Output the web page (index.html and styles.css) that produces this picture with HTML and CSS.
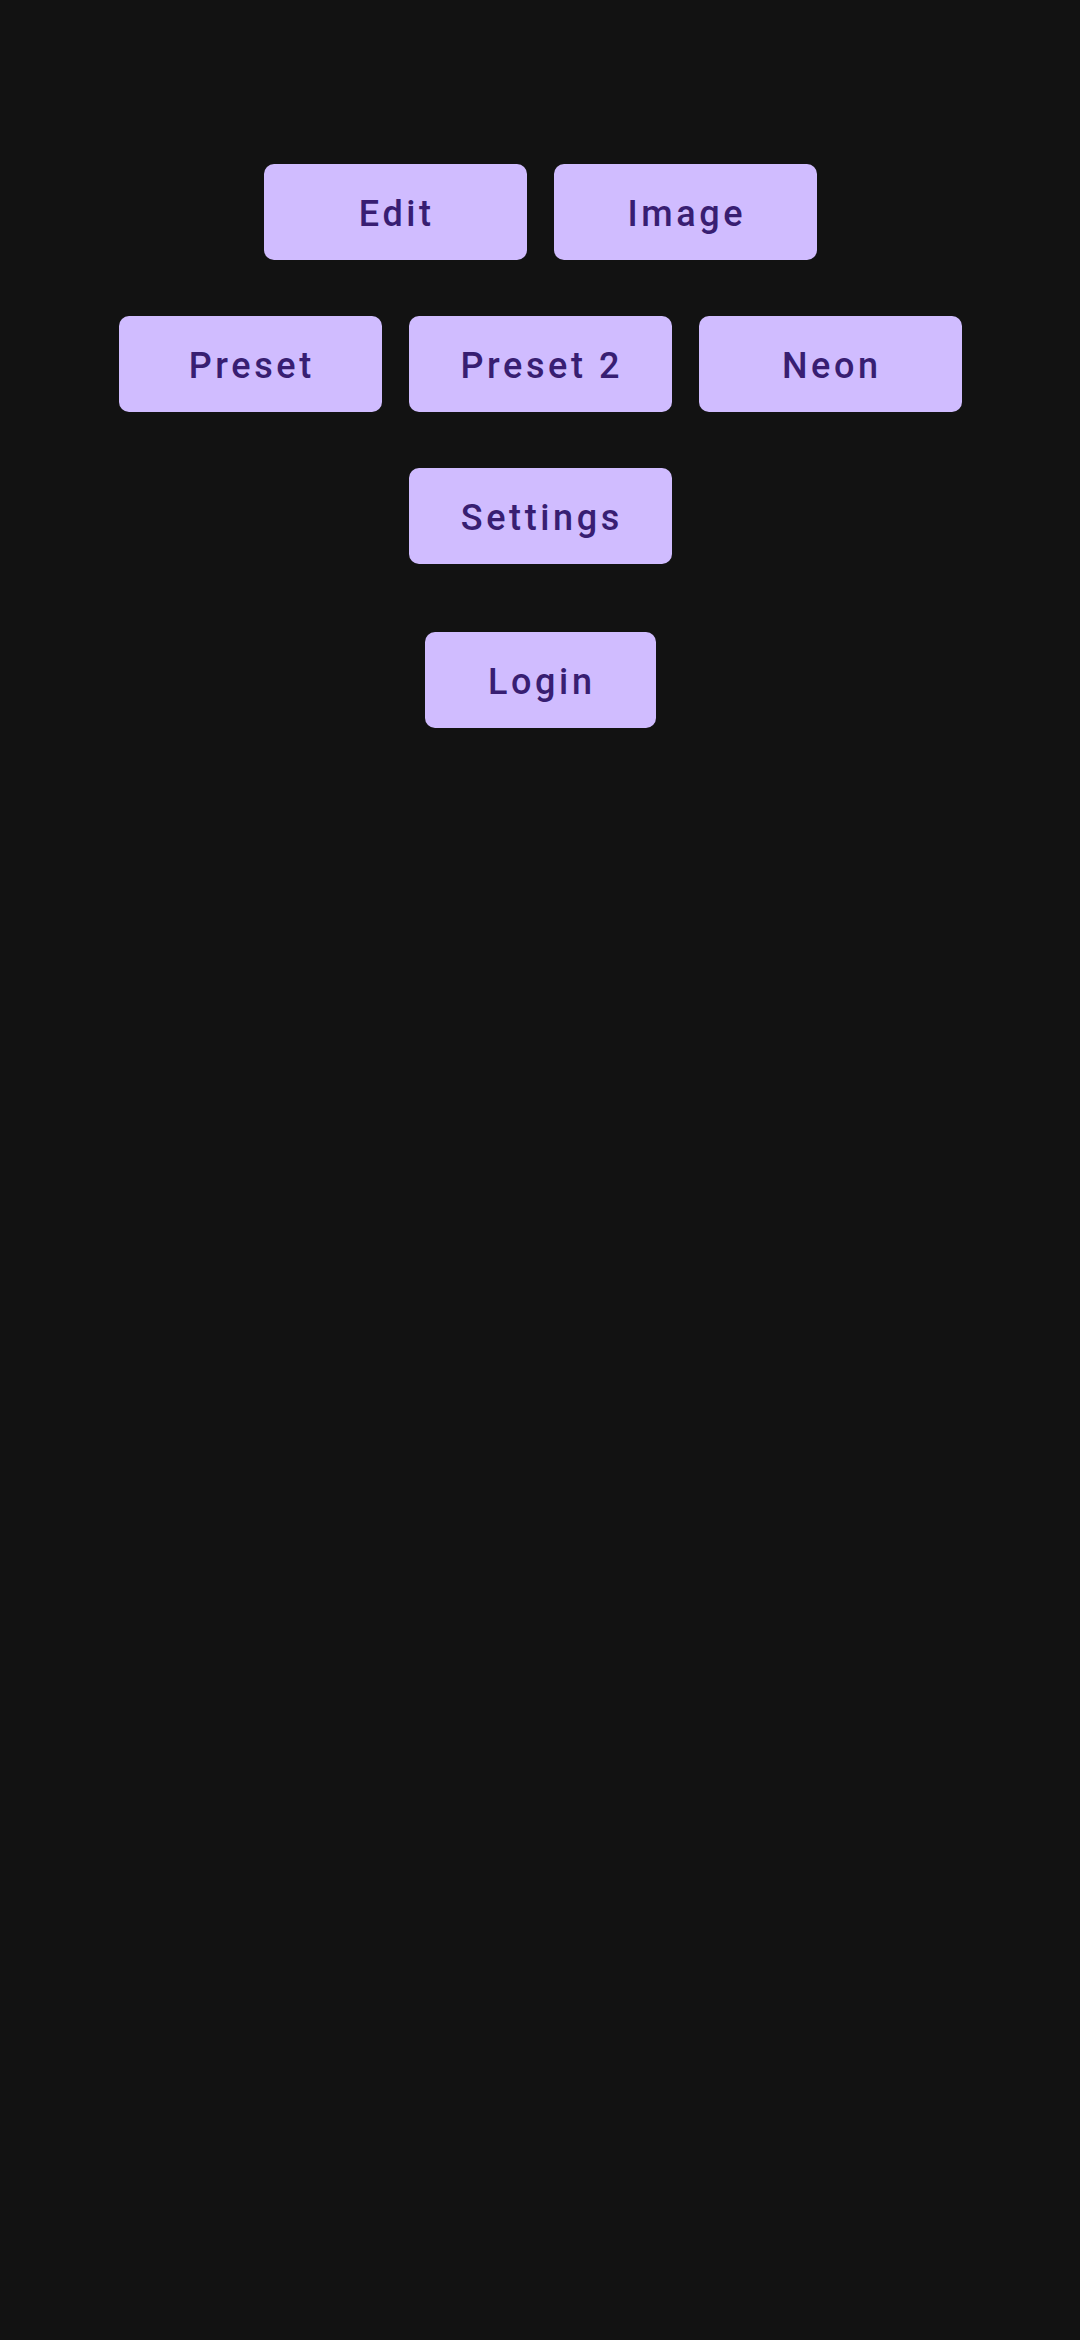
FILE: index.html
```html
<!DOCTYPE html>
<html lang="en">
<head>
    <meta charset="UTF-8">
    <title>Buttons</title>
    <link rel="stylesheet" href="styles.css">
</head>
<body>
    <div class="screen">
        <div class="row">
            <button class="btn">Edit</button>
            <button class="btn">Image</button>
        </div>
        <div class="row">
            <button class="btn">Preset</button>
            <button class="btn">Preset 2</button>
            <button class="btn">Neon</button>
        </div>
        <div class="row">
            <button class="btn">Settings</button>
        </div>
        <div class="row login-row">
            <button class="btn btn-login">Login</button>
        </div>
    </div>
</body>
</html>
```

FILE: styles.css
```css
body { margin: 0; padding: 0; background: #121212; font-family: Roboto, "Noto Sans", sans-serif; }
.screen { min-height: 2340px; padding-top: 164px; box-sizing: border-box; display: flex; flex-direction: column; align-items: center; gap: 56px; }
.row { display: flex; justify-content: center; gap: 27px; }
.login-row { margin-top: 12px; }
.btn { width: 263px; height: 96px; background: #d0bcff; color: #381e72; border: none; border-radius: 10px; font-family: Roboto, sans-serif; font-size: 36px; font-weight: 500; letter-spacing: 0.1em; padding: 3px 0 0 0.1em; cursor: pointer; }
.btn-login { width: 231px; }
```
